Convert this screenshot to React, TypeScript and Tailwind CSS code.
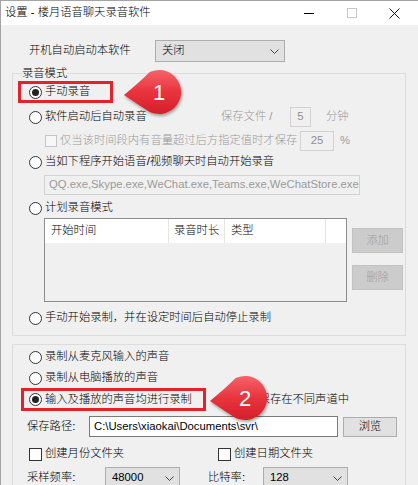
import React from 'react';

function Radio({ checked = false, label }: { checked?: boolean; label: string }) {
  return (
    <div className="flex items-center gap-[3px] whitespace-nowrap text-black">
      <span className="flex h-[13px] w-[13px] shrink-0 items-center justify-center rounded-full border border-[#333333] bg-white">
        {checked && <span className="h-[7px] w-[7px] rounded-full bg-[#222222]" />}
      </span>
      <span>{label}</span>
    </div>
  );
}

function Checkbox({ label, disabled = false }: { label: string; disabled?: boolean }) {
  return (
    <div className={`flex items-center gap-[3px] whitespace-nowrap ${disabled ? 'text-[#9a9a9a]' : 'text-black'}`}>
      <span
        className={`shrink-0 border ${disabled ? 'h-[12px] w-[12px] border-[#c4c4c4] bg-[#f7f7f7]' : 'h-[13px] w-[13px] border-[#333333] bg-white'}`}
      />
      <span>{label}</span>
    </div>
  );
}

const Chevron = () => (
  <svg width="9" height="5" viewBox="0 0 9 5" className="shrink-0">
    <polyline points="0.5,0.5 4.5,4.5 8.5,0.5" fill="none" stroke="#444" strokeWidth="1" />
  </svg>
);

function Dropdown({ value, className }: { value: string; className: string }) {
  return (
    <div
      className={`flex h-[22px] items-center justify-between border border-[#adadad] bg-[#e1e1e1] pl-[6px] pr-[5px] text-black ${className}`}
    >
      <span>{value}</span>
      <Chevron />
    </div>
  );
}

// red teardrop marker with a number in it
function Callout({ n, className, id }: { n: string; className: string; id: string }) {
  return (
    <svg width="70" height="58" viewBox="0 0 70 58" className={`absolute ${className}`}>
      <defs>
        <linearGradient id={`g${id}`} x1="0" y1="0" x2="0" y2="1">
          <stop offset="0" stopColor="#f5636a" />
          <stop offset="0.5" stopColor="#e8343d" />
          <stop offset="1" stopColor="#d41f2a" />
        </linearGradient>
        <filter id={`s${id}`} x="-20%" y="-20%" width="140%" height="150%">
          <feDropShadow dx="1" dy="2" stdDeviation="1.6" floodColor="#000" floodOpacity="0.35" />
        </filter>
      </defs>
      <path
        d="M4 29 Q20 16 29.7 6.1 A22 22 0 1 1 29.7 45.9 Q20 40 4 29 Z"
        fill={`url(#g${id})`}
        filter={`url(#s${id})`}
      />
      <text
        x="39"
        y="34"
        textAnchor="middle"
        fontSize="22"
        fill="#ffffff"
        fontFamily="Liberation Sans, Arial, sans-serif"
      >
        {n}
      </text>
    </svg>
  );
}

export default function App() {
  return (
    <div className="relative h-[485px] w-[418px] overflow-hidden border-l border-t border-[#a3a3a3] bg-[#f0f0f0] font-['Liberation_Sans','Noto_Sans_CJK_SC',sans-serif] text-[11.3px] font-light leading-none">
      {/* title bar */}
      <div className="flex h-[24px] items-center bg-white pl-[4px]">
        <span className="text-black">设置 - 楼月语音聊天录音软件</span>
        <div className="ml-auto mr-[2px] flex h-full">
          <div className="flex w-[43px] items-center justify-center">
            <span className="h-px w-[10px] bg-black" />
          </div>
          <div className="flex w-[43px] items-center justify-center">
            <span className="h-[10px] w-[10px] border border-[#c6c6c6]" />
          </div>
          <div className="flex w-[43px] items-center justify-center">
            <svg width="11" height="11" viewBox="0 0 11 11">
              <path d="M0.5 0.5 L10.5 10.5 M10.5 0.5 L0.5 10.5" stroke="#111" strokeWidth="1" />
            </svg>
          </div>
        </div>
      </div>

      {/* autostart */}
      <div className="mt-[15px] flex h-[22px] items-center">
        <span className="w-[154px] pl-[28px] text-black">开机自动启动本软件</span>
        <Dropdown value="关闭" className="w-[130px]" />
      </div>

      {/* recording mode group */}
      <fieldset className="ml-[11px] mt-[4px] w-[394px] border border-[#dcdcdc] pb-[6px]">
        <legend className="ml-[9px] px-0 leading-[14px] text-black">录音模式</legend>
        <div className="flex flex-col">
          <div className="ml-[5px] mt-[1px] flex h-[22px] w-[95px] items-center border-[3px] border-[#e3222b] pl-[8px]">
            <Radio checked label="手动录音" />
          </div>

          <div className="flex h-[28px] items-center pl-[16px]">
            <div className="w-[192px]">
              <Radio label="软件启动后自动录音" />
            </div>
            <span className="w-[69px] whitespace-nowrap text-[#9a9a9a]">保存文件 /</span>
            <div className="flex h-[20px] w-[21px] items-center justify-center border border-[#d2d2d2] bg-[#f0f0f0] text-[#8e8e8e]">
              5
            </div>
            <span className="ml-[15px] text-[#9a9a9a]">分钟</span>
          </div>

          <div className="flex h-[20px] items-center pl-[32px]">
            <div className="w-[255px]">
              <Checkbox disabled label="仅当该时间段内有音量超过后方指定值时才保存" />
            </div>
            <div className="flex h-[20px] w-[34px] items-center justify-center border border-[#d2d2d2] bg-[#f0f0f0] text-[#8e8e8e]">
              25
            </div>
            <span className="ml-[6px] text-[#9a9a9a]">%</span>
          </div>

          <div className="flex h-[22px] items-center pl-[16px]">
            <Radio label="当如下程序开始语音/视频聊天时自动开始录音" />
          </div>

          <div className="ml-[31px] mt-[2px] flex h-[20px] w-[316px] items-center overflow-hidden whitespace-nowrap border border-[#d2d2d2] bg-[#f0f0f0] pl-[4px] text-[#9a9a9a]">
            QQ.exe,Skype.exe,WeChat.exe,Teams.exe,WeChatStore.exe
          </div>

          <div className="mt-[3px] flex h-[20px] items-center pl-[16px]">
            <Radio label="计划录音模式" />
          </div>

          <div className="flex h-[84px]">
            <div className="ml-[31px] h-[84px] w-[303px] border border-[#8c8c8c] bg-[#f0f0f0]">
              <div className="flex h-[24px] bg-white text-black">
                <div className="flex w-[124px] items-center border-r border-[#e5e5e5] pl-[6px]">开始时间</div>
                <div className="flex w-[56px] items-center border-r border-[#e5e5e5] pl-[5px]">录音时长</div>
                <div className="flex w-[101px] items-center border-r border-[#e5e5e5] pl-[6px]">类型</div>
                <div className="flex-1" />
              </div>
            </div>
            <div className="ml-[5px] flex flex-col gap-[12px] pt-[10px]">
              <div className="flex h-[25px] w-[51px] items-center justify-center border border-[#c2c2c2] bg-[#cccccc] text-[#9d9d9d]">
                添加
              </div>
              <div className="flex h-[25px] w-[51px] items-center justify-center border border-[#c2c2c2] bg-[#cccccc] text-[#9d9d9d]">
                删除
              </div>
            </div>
          </div>

          <div className="mt-[5px] flex h-[22px] items-center pl-[16px]">
            <Radio label="手动开始录制，并在设定时间后自动停止录制" />
          </div>
        </div>
      </fieldset>

      {/* source and output group */}
      <div className="ml-[11px] mt-[8px] flex h-[200px] w-[394px] flex-col border border-[#dcdcdc] pt-[1px]">
        <div className="flex h-[22px] items-center pl-[16px]">
          <Radio label="录制从麦克风输入的声音" />
        </div>
        <div className="flex h-[20px] items-center pl-[16px]">
          <Radio label="录制从电脑播放的声音" />
        </div>
        <div className="flex h-[23px] items-center">
          <div className="ml-[8px] flex h-[23px] w-[185px] items-center border-[3px] border-[#e3222b] pl-[5px]">
            <Radio checked label="输入及播放的声音均进行录制" />
          </div>
          <div className="ml-[14px]">
            <Checkbox label="分别保存在不同声道中" />
          </div>
        </div>

        <div className="mt-[5px] flex h-[21px] items-center pl-[14px]">
          <span className="w-[62px] text-black">保存路径:</span>
          <div className="flex h-[21px] w-[249px] items-center overflow-hidden whitespace-nowrap border border-[#7a7a7a] bg-white pl-[4px] text-black">
            C:\Users\xiaokai\Documents\svr\
          </div>
          <div className="ml-[5px] flex h-[20px] w-[54px] items-center justify-center border border-[#adadad] bg-[#e1e1e1] text-black">
            浏览
          </div>
        </div>

        <div className="mt-[7px] flex h-[20px] items-center pl-[16px]">
          <div className="w-[189px]">
            <Checkbox label="创建月份文件夹" />
          </div>
          <Checkbox label="创建日期文件夹" />
        </div>

        <div className="mt-[3px] flex h-[22px] items-center pl-[14px]">
          <span className="w-[78px] text-black">采样频率:</span>
          <Dropdown value="48000" className="w-[75px]" />
          <span className="ml-[28px] w-[55px] text-black">比特率:</span>
          <Dropdown value="128" className="w-[85px]" />
        </div>
      </div>

      <Callout n="1" id="a" className="left-[119px] top-[65px]" />
      <Callout n="2" id="b" className="left-[205px] top-[371px]" />
    </div>
  );
}
